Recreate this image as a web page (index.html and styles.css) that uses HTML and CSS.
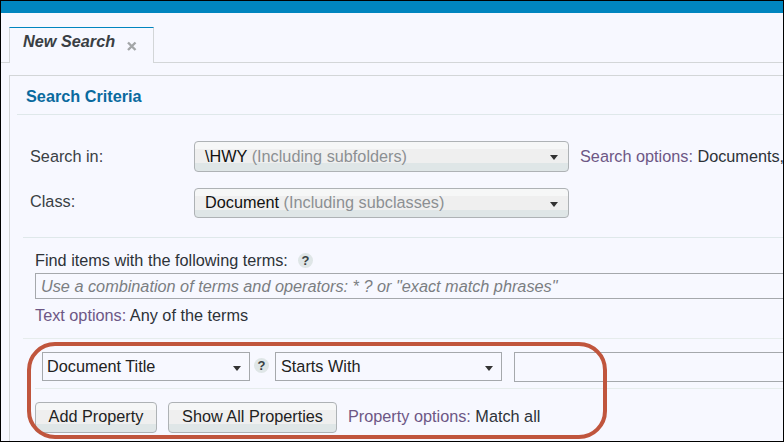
FILE: index.html
```html
<!DOCTYPE html>
<html lang="en">
<head>
<meta charset="utf-8">
<title>New Search</title>
<link rel="stylesheet" href="styles.css">
</head>
<body>
<div class="frame">
  <div class="topbar"></div>
  <div class="tabstrip">
    <div class="tab">
      <span class="tab-title">New Search</span>
      <svg class="tab-close" width="10" height="10" viewBox="0 0 10 10"><path d="M1 1.5L8.5 9M8.5 1.5L1 9" stroke="#a3a6a8" stroke-width="2.4" fill="none"/></svg>
    </div>
  </div>
  <div class="panel">
    <div class="panel-title"><h2>Search Criteria</h2></div>
    <div class="scope">
      <div class="row row-search">
        <span class="label">Search in:</span>
        <div class="combo"><span class="val">\HWY</span> <span class="hint">(Including subfolders)</span><i class="arrow"></i></div>
        <span class="opts"><span class="opt-k">Search options:</span> Documents,</span>
      </div>
      <div class="row row-class">
        <span class="label">Class:</span>
        <div class="combo combo-short"><span class="val">Document</span> <span class="hint">(Including subclasses)</span><i class="arrow"></i></div>
      </div>
    </div>
    <div class="terms">
      <div class="terms-label">Find items with the following terms:<span class="help help-a">?</span></div>
      <div class="terms-input">Use a combination of terms and operators: * ? or "exact match phrases"</div>
      <div class="text-opts"><span class="opt-k">Text options:</span> Any of the terms</div>
    </div>
    <div class="props">
      <div class="prop-row">
        <div class="sel sel-a">Document Title<i class="arrow"></i></div>
        <span class="help help-b">?</span>
        <div class="sel sel-b">Starts With<i class="arrow"></i></div>
        <div class="prop-val"></div>
      </div>
      <div class="prop-actions">
        <button class="btn btn-add">Add Property</button>
        <button class="btn btn-all">Show All Properties</button>
        <span class="opts prop-opts"><span class="opt-k">Property options:</span> Match all</span>
      </div>
    </div>
  </div>
  <div class="callout"></div>
</div>
</body>
</html>
```
FILE: styles.css
```css
* { box-sizing: border-box; }
html, body { margin: 0; padding: 0; }
body { width: 784px; height: 442px; overflow: hidden; font-family: "Liberation Sans", Arial, sans-serif; font-size: 16.25px; color: #333; background: #f7f8ff; }
.frame { position: relative; width: 784px; height: 442px; border: 1px solid #000; overflow: hidden; background: #f7f8ff; }
.topbar { height: 12px; background: #0085bf; }
.tabstrip { height: 50px; padding: 14px 0 0 8px; border-bottom: 1px solid #d3d6d8; }
.tab { width: 145px; height: 36px; border: 1px solid #d3d6d8; border-top: 1px solid #0085bf; border-bottom: 0; background: #f7f8ff; padding: 4px 0 0 13px; display: flex; align-items: flex-start; }
.tab-title { font-size: 16.25px; font-weight: bold; font-style: italic; color: #3a3f44; line-height: 19px; white-space: nowrap; }
.tab-close { margin: 9px 0 0 12px; flex: none; }
.panel { margin: 12px 0 0 8px; border: 1px solid #d3d6d8; border-right: 0; border-bottom: 0; height: 400px; }
.panel-title { margin-left: 7px; height: 39px; border-bottom: 1px solid #dfe8ea; padding: 11px 0 0 9px; }
.panel-title h2 { margin: 0; font-size: 16.25px; line-height: 19px; font-weight: bold; color: #0a6a9e; }
.scope { height: 123px; margin-left: 13px; padding: 26px 0 0 7px; border-bottom: 1px solid #dfe8ea; }
.row { display: flex; align-items: center; height: 31px; }
.row-class { margin-top: 15px; }
.label { width: 164px; flex: none; color: #3a3f44; line-height: 19px; margin-top: -1px; }
.row-class .label { margin-top: -2px; }
.combo { position: relative; flex: none; width: 375px; height: 31px; border: 1px solid #aeb2b5; border-radius: 4px; padding: 0 0 0 10px; line-height: 28px; white-space: nowrap; background: linear-gradient(#f6f7f7 0 7px, #efefef 7px 21px, #dfe6e7 21px); }
.combo-short { height: 30px; line-height: 26px; }
.val { color: #111; }
.hint { color: #8c8f93; }
.arrow { position: absolute; right: 10px; top: 13px; width: 0; height: 0; border-left: 4.5px solid transparent; border-right: 4.5px solid transparent; border-top: 5px solid #333; }
.opts { color: #2d3238; white-space: nowrap; }
.row-search .opts { margin-left: 11px; margin-top: -1px; }
.opt-k { color: #6d5785; }
.terms { margin-left: 13px; height: 101px; padding: 13px 0 0 12px; border-bottom: 1px solid #e6ecec; }
.terms-label { height: 22px; line-height: 19px; color: #2d3238; display: flex; align-items: flex-start; }
.help { display: inline-block; width: 15px; height: 15px; border-radius: 50%; background: #dfe6e7; color: #3a3f44; font-size: 13px; font-weight: bold; line-height: 15px; text-align: center; flex: none; }
.help-a { margin: 2px 0 0 10px; }
.help-b { margin: 0 6px 0 4px; }
.terms-input { width: 760px; height: 26px; border: 1px solid #a5a8ac; border-right: 0; font-style: italic; color: #7b7e82; line-height: 24px; padding-left: 5px; white-space: nowrap; }
.text-opts { margin-top: 7px; line-height: 19px; color: #2d3238; }
.props { margin-left: 25px; }
.prop-row { display: flex; align-items: flex-start; height: 50px; padding: 13px 0 0 7px; border-bottom: 1px solid #e6ecec; }
.prop-row .help { margin-top: 6px; }
.sel { position: relative; height: 29px; border: 1px solid #a5a8ac; color: #222; line-height: 27px; padding-left: 4px; background: #f7f8ff; white-space: nowrap; flex: none; }
.sel-a { width: 208px; }
.sel-b { width: 227px; padding-left: 5px; }
.sel .arrow { right: 8px; top: 13px; }
.prop-val { margin-left: 12px; width: 300px; height: 30px; border: 1px solid #a5a8ac; flex: none; }
.prop-actions { display: flex; align-items: center; padding-top: 13px; }
.btn { height: 31px; border: 1px solid #aeb2b5; border-radius: 4px; font: 16.25px "Liberation Sans", Arial, sans-serif; color: #222; padding: 0 0 3px; background: linear-gradient(#f6f7f7 0 7px, #efefef 7px 21px, #dfe6e7 21px); }
.btn-add { width: 122px; }
.btn-all { width: 169px; margin-left: 11px; }
.prop-opts { margin-left: 11px; margin-top: -3px; }
.callout { position: absolute; left: 26px; top: 341px; width: 580px; height: 97px; border: 4px solid #c0553d; border-radius: 28px; }
```
